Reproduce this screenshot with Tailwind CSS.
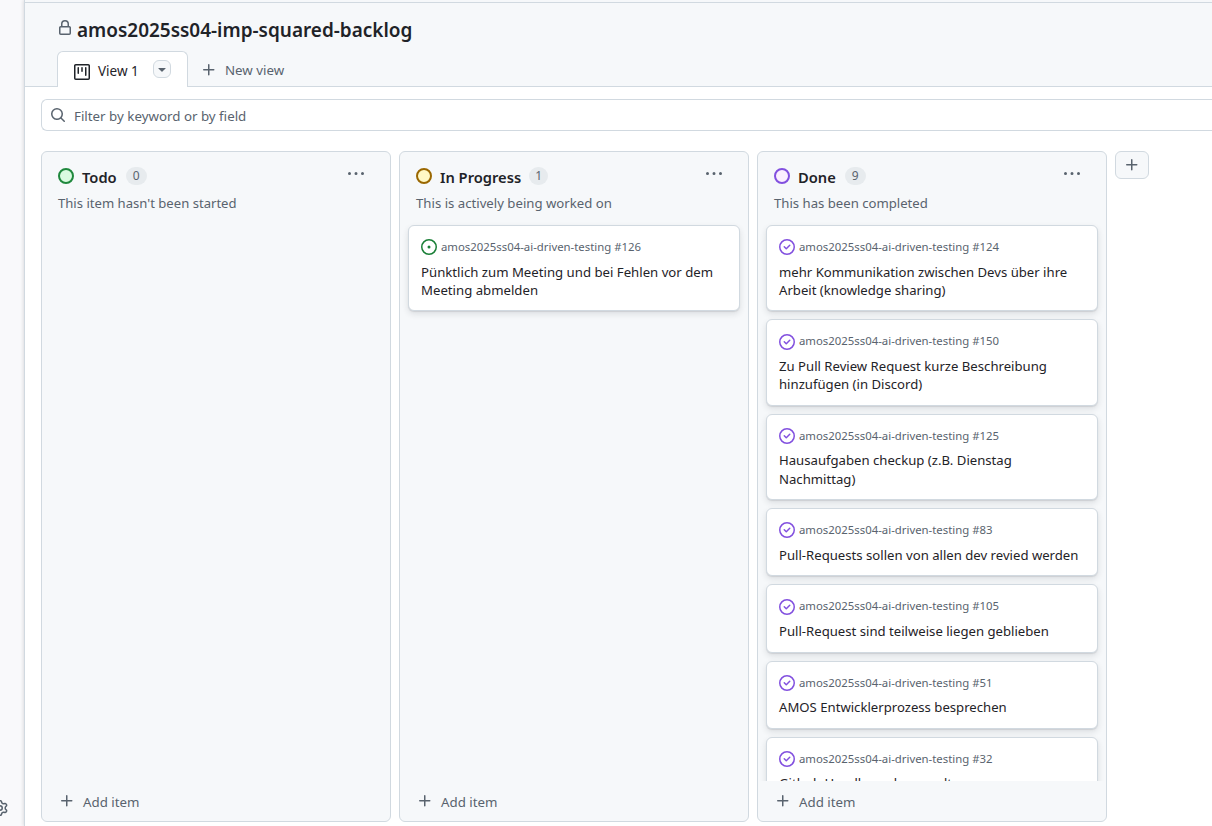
<!DOCTYPE html>
<html lang="en">
<head>
<meta charset="utf-8">
<title>amos2025ss04-imp-squared-backlog</title>
<script src="https://cdn.jsdelivr.net/npm/@tailwindcss/browser@4"></script>
</head>
<body class="bg-white text-[#1f2328] font-['Noto_Sans','Liberation_Sans',sans-serif] text-[13.2px] overflow-hidden">
<svg class="hidden">
  <symbol id="plus" viewBox="0 0 16 16"><path d="M7.75 2a.75.75 0 0 1 .75.75V7h4.25a.75.75 0 0 1 0 1.500H8.500v4.250a.75.75 0 0 1-1.500 0V8.500H2.750a.75.75 0 0 1 0-1.500H7V2.750A.75.75 0 0 1 7.750 2Z"/></symbol>
  <symbol id="dots" viewBox="0 0 16 16"><path d="M8 9a1.500 1.500 0 1 0 0-3 1.500 1.500 0 0 0 0 3ZM1.500 9a1.500 1.500 0 1 0 0-3 1.500 1.500 0 0 0 0 3Zm13 0a1.500 1.500 0 1 0 0-3 1.500 1.500 0 0 0 0 3Z"/></symbol>
  <symbol id="open" viewBox="0 0 16 16"><path d="M8 9.500a1.500 1.500 0 1 0 0-3 1.500 1.500 0 0 0 0 3Z"/><path d="M8 0a8 8 0 1 1 0 16A8 8 0 0 1 8 0ZM1.500 8a6.500 6.500 0 1 0 13 0 6.500 6.500 0 0 0-13 0Z"/></symbol>
  <symbol id="closed" viewBox="0 0 16 16"><path d="M11.280 6.780a.75.75 0 0 0-1.060-1.060L7.250 8.690 5.780 7.220a.75.75 0 0 0-1.060 1.060l2 2a.75.75 0 0 0 1.060 0l3.500-3.500Z"/><path d="M16 8A8 8 0 1 1 0 8a8 8 0 0 1 16 0Zm-1.500 0a6.500 6.500 0 1 0-13 0 6.500 6.500 0 0 0 13 0Z"/></symbol>
</svg>
<div class="flex h-[826px] w-[1212px]">
  <aside class="w-6 shrink-0 bg-[#f9f9fb] flex flex-col justify-end pb-[10px] overflow-hidden">
    <svg class="size-4 -ml-2 shrink-0" viewBox="0 0 16 16" fill="#59636e"><path d="M8 0a8.200 8.200 0 0 1 .701.031C9.444.095 9.990.645 10.160 1.290l.288 1.107c.018.066.079.158.212.224.231.114.454.243.668.386.123.082.233.090.299.071l1.103-.303c.644-.176 1.392.021 1.820.630.270.385.506.792.704 1.218.315.675.111 1.422-.364 1.891l-.814.806c-.049.048-.098.147-.088.294.016.257.016.515 0 .772-.010.147.038.246.088.294l.814.806c.475.469.679 1.216.364 1.891a7.977 7.977 0 0 1-.704 1.217c-.428.610-1.176.807-1.820.630l-1.102-.302c-.067-.019-.177-.011-.300.071a5.909 5.909 0 0 1-.668.386c-.133.066-.194.158-.211.224l-.290 1.106c-.168.646-.715 1.196-1.458 1.260a8.006 8.006 0 0 1-1.402 0c-.743-.064-1.289-.614-1.458-1.260l-.289-1.106c-.018-.066-.079-.158-.212-.224a5.738 5.738 0 0 1-.668-.386c-.123-.082-.233-.090-.299-.071l-1.103.303c-.644.176-1.392-.021-1.820-.630a8.120 8.120 0 0 1-.704-1.218c-.315-.675-.111-1.422.363-1.891l.815-.806c.050-.048.098-.147.088-.294a6.214 6.214 0 0 1 0-.772c.010-.147-.038-.246-.088-.294l-.815-.806C.635 6.045.431 5.298.746 4.623a7.920 7.920 0 0 1 .704-1.217c.428-.610 1.176-.807 1.820-.630l1.102.302c.067.019.177.011.300-.071.214-.143.437-.272.668-.386.133-.066.194-.158.211-.224l.290-1.106C6.009.645 6.556.095 7.299.030 7.530.010 7.764 0 8 0Zm-.571 1.525c-.036.003-.108.036-.137.146l-.289 1.105c-.147.561-.549.967-.998 1.189-.173.086-.340.183-.500.290-.417.278-.970.423-1.529.270l-1.103-.303c-.109-.030-.175.016-.195.045-.220.312-.412.644-.573.990-.014.031-.021.110.059.190l.815.806c.411.406.562.957.530 1.456a4.709 4.709 0 0 0 0 .582c.032.499-.119 1.050-.530 1.456l-.815.806c-.081.080-.073.159-.059.190.162.346.353.677.573.989.020.030.085.076.195.046l1.102-.303c.560-.153 1.113-.008 1.530.270.161.107.328.204.501.290.447.222.850.629.997 1.189l.289 1.105c.029.109.101.143.137.146a6.600 6.600 0 0 0 1.142 0c.036-.003.108-.036.137-.146l.289-1.105c.147-.561.549-.967.998-1.189.173-.086.340-.183.500-.290.417-.278.970-.423 1.529-.270l1.103.303c.109.029.175-.016.195-.045.220-.313.411-.644.573-.990.014-.031.021-.110-.059-.190l-.815-.806c-.411-.406-.562-.957-.530-1.456a4.709 4.709 0 0 0 0-.582c-.032-.499.119-1.050.530-1.456l.815-.806c.081-.080.073-.159.059-.190a6.464 6.464 0 0 0-.573-.989c-.020-.030-.085-.076-.195-.046l-1.102.303c-.560.153-1.113.008-1.530-.270a4.440 4.440 0 0 0-.501-.290c-.447-.222-.850-.629-.997-1.189l-.289-1.105c-.029-.110-.101-.143-.137-.146a6.600 6.600 0 0 0-1.142 0ZM11 8a3 3 0 1 1-6 0 3 3 0 0 1 6 0ZM9.500 8a1.500 1.500 0 1 0-3.001.001A1.500 1.500 0 0 0 9.500 8Z"/></svg>
  </aside>
  <main class="flex-1 min-w-0 border-l border-[#d1d9e0] shadow-[-1px_0_3px_rgba(31,35,40,0.12)] flex flex-col bg-white">
    <header class="h-[87px] shrink-0 bg-[#f6f8fa] flex flex-col">
      <div class="h-[3px] border-b border-[#d1d9e0]"></div>
      <div class="h-12 pl-8 pt-[10px] flex items-start">
        <svg class="size-4 mt-[7px] mr-1" viewBox="0 0 16 16" fill="#59636e"><path d="M4 6V4a4 4 0 1 1 8 0v2h.250c.966 0 1.750.784 1.750 1.750v5.500A1.750 1.750 0 0 1 12.250 15h-8.500A1.750 1.750 0 0 1 2 13.250v-5.500C2 6.784 2.784 6 3.750 6Zm8.250 1.500h-8.500a.25.25 0 0 0-.250.250v5.500c0 .138.112.25.250.25h8.500a.25.25 0 0 0 .250-.25v-5.500a.25.25 0 0 0-.250-.25ZM10.500 6V4a2.500 2.500 0 1 0-5 0v2Z"/></svg>
        <h1 class="font-semibold text-[18.97px] leading-[34px]">amos2025ss04-imp-squared-backlog</h1>
      </div>
      <div class="h-9 flex">
        <div class="w-8 border-b border-[#d1d9e0]"></div>
        <div class="w-[131px] bg-white border border-b-0 border-[#d1d9e0] rounded-t-md flex pl-4">
          <svg class="size-4 mt-3 mr-2" viewBox="0 0 16 16" fill="#1f2328"><path d="M1.750 0h12.500C15.216 0 16 .784 16 1.750v12.500A1.750 1.750 0 0 1 14.250 16H1.750A1.750 1.750 0 0 1 0 14.250V1.750C0 .784.784 0 1.750 0ZM1.500 1.750v12.500c0 .138.112.25.250.25h12.500a.25.25 0 0 0 .250-.25V1.750a.25.25 0 0 0-.250-.25H1.750a.25.25 0 0 0-.250.25ZM11.750 3a.75.75 0 0 1 .750.750v7.500a.75.75 0 0 1-1.500 0v-7.500a.75.75 0 0 1 .750-.750Zm-8.250.750a.75.75 0 0 1 1.500 0v5.500a.75.75 0 0 1-1.500 0ZM8 3a.75.75 0 0 1 .750.750v3.500a.75.75 0 0 1-1.500 0v-3.500A.75.75 0 0 1 8 3Z"/></svg>
          <span class="leading-[38px] w-[55px] text-[13.5px]">View 1</span>
          <button class="size-[18px] mt-2 rounded-md border border-[#d1d9e0] bg-[#f6f8fa] flex items-center justify-center"><svg class="size-4 shrink-0" viewBox="0 0 16 16" fill="#59636e"><path d="m4.427 7.427 3.396 3.396a.25.25 0 0 0 .354 0l3.396-3.396A.25.25 0 0 0 11.396 7H4.604a.25.25 0 0 0-.177.427Z"/></svg></button>
        </div>
        <div class="flex-1 border-b border-[#d1d9e0] flex pl-[13px] text-[#59636e]">
          <svg class="size-4 mt-[11px] mr-2" fill="#59636e"><use href="#plus"/></svg>
          <span class="leading-[39px] text-[13.3px]">New view</span>
        </div>
      </div>
    </header>
    <div class="mt-3 ml-4 h-8 shrink-0 border border-r-0 border-[#d1d9e0] rounded-l-md flex pl-2 text-[#59636e]">
      <svg class="size-4 mt-[7px] mr-2" viewBox="0 0 16 16" fill="#59636e"><path d="M10.680 11.740a6 6 0 0 1-7.922-8.982 6 6 0 0 1 8.982 7.922l3.040 3.040a.749.749 0 0 1-.326 1.275.749.749 0 0 1-.734-.215ZM11.500 7a4.499 4.499 0 1 0-8.997 0A4.499 4.499 0 0 0 11.500 7Z"/></svg>
      <span class="leading-[33px] text-[13.33px]">Filter by keyword or by field</span>
    </div>
    <div id="board" class="mt-5 ml-4 flex gap-2 h-[671px] items-stretch"></div>
  </main>
</div>
<script>
const columns = [
  {name: 'Todo', count: 0, note: "This item hasn't been started", noteSize: 'text-[13.1px]', badge: 'ml-[9px] w-[21px]', ring: 'border-[#1f883d] bg-[#dafbe1]', cards: []},
  {name: 'In Progress', count: 1, note: 'This is actively being worked on', noteSize: 'text-[13.2px]', badge: 'ml-2 w-[19px]', ring: 'border-[#9a6700] bg-[#fff8c5]', cards: [
    [126, 'Pünktlich zum Meeting und bei Fehlen vor dem<br>Meeting abmelden', 'open']]},
  {name: 'Done', count: 9, note: 'This has been completed', noteSize: 'text-[13.15px]', badge: 'ml-[9px] w-[21px]', ring: 'border-[#8250df] bg-[#fbefff]', cards: [
    [124, 'mehr Kommunikation zwischen Devs über ihre<br>Arbeit (knowledge sharing)'],
    [150, 'Zu Pull Review Request kurze Beschreibung<br>hinzufügen (in Discord)'],
    [125, 'Hausaufgaben checkup (z.B. Dienstag<br>Nachmittag)'],
    [83, 'Pull-Requests sollen von allen dev revied werden'],
    [105, 'Pull-Request sind teilweise liegen geblieben'],
    [51, 'AMOS Entwicklerprozess besprechen'],
    [32, 'Github Handle nachgesandt']]}
];
const card = ([n, title, state]) => `
  <article class="shrink-0 bg-white border border-[#d1d9e0] rounded-md px-3 pt-3 pb-[11.3px] shadow-[0_1px_1px_rgba(37,41,46,0.1),0_3px_6px_rgba(37,41,46,0.12)]">
    <div class="flex h-[18px] text-[11.37px] leading-[18px] text-[#59636e]">
      <svg class="size-4 mt-[1.3px] mr-1 shrink-0 ${state ? 'text-[#1a7f37]' : 'text-[#8250df]'}" fill="currentColor"><use href="#${state || 'closed'}"/></svg>
      <span>amos2025ss04-ai-driven-testing #${n}</span>
    </div>
    <h3 class="mt-[6.7px] ${state ? 'text-[13.2px]' : 'text-[13.15px]'} leading-[18.200px] whitespace-nowrap">${title}</h3>
  </article>`;
document.getElementById('board').innerHTML = columns.map(c => `
  <section class="w-[350px] shrink-0 bg-[#f6f8fa] border border-[#d1d9e0] rounded-md flex flex-col">
    <div class="h-[65px] shrink-0 px-4 pt-4">
      <div class="flex h-[18px]">
        <span class="size-4 rounded-full border-2 ${c.ring}"></span>
        <h2 class="ml-2 font-semibold text-[14.7px] leading-[19px]">${c.name}</h2>
        <span class="${c.badge} -mt-px h-[18px] rounded-full bg-[#e7ebee] text-center text-[12px] leading-[18px] text-[#59636e]">${c.count}</span>
        <svg class="size-4 ml-auto mr-[10px] -mt-[2px]" fill="#59636e"><use href="#dots"/></svg>
      </div>
      <p class="mt-[8px] leading-[18px] ${c.noteSize} text-[#59636e]">${c.note}</p>
    </div>
    <div class="flex-1 min-h-0 overflow-hidden flex flex-col gap-2 px-2 pt-2">${c.cards.map(card).join('')}</div>
    <div class="h-10 shrink-0 flex pl-[17px] text-[#59636e]">
      <svg class="size-4 mt-3 mr-2" fill="#59636e"><use href="#plus"/></svg>
      <span class="leading-[43px] text-[13.3px]">Add item</span>
    </div>
  </section>`).join('') + `
  <button class="w-[34px] h-7 shrink-0 border border-[#d1d9e0] bg-[#f6f8fa] rounded-md flex items-center justify-center"><svg class="size-4" fill="#59636e"><use href="#plus"/></svg></button>`;
</script>
</body>
</html>
